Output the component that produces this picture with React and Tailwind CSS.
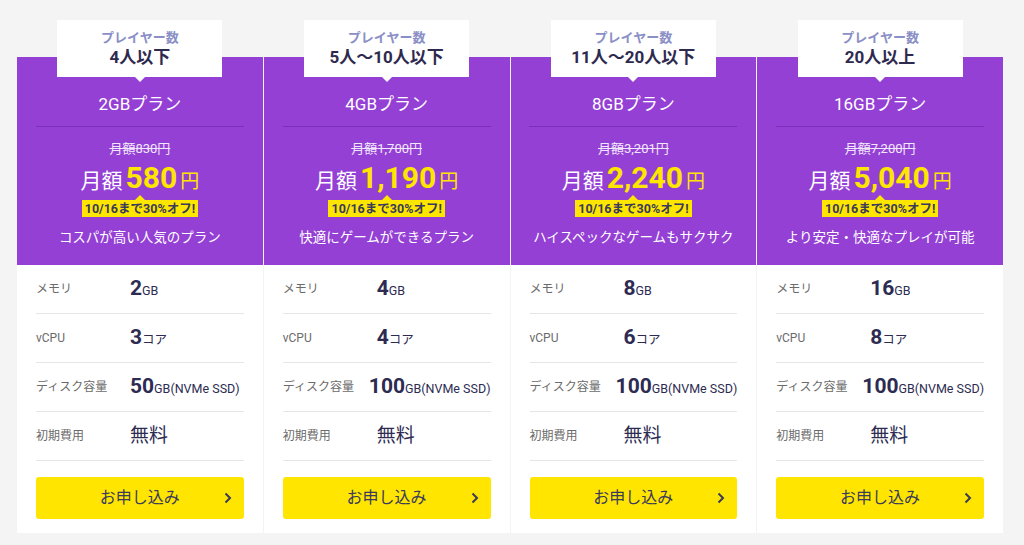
import React from "react";

const plans = [
  { players: "4人以下", plan: "2GB", old: "830", price: "580", desc: "コスパが高い人気のプラン", mem: "2", cpu: "3", disk: "50" },
  { players: "5人〜10人以下", plan: "4GB", old: "1,700", price: "1,190", desc: "快適にゲームができるプラン", mem: "4", cpu: "4", disk: "100" },
  { players: "11人〜20人以下", plan: "8GB", old: "3,201", price: "2,240", desc: "ハイスペックなゲームもサクサク", mem: "8", cpu: "6", disk: "100" },
  { players: "20人以上", plan: "16GB", old: "7,200", price: "5,040", desc: "より安定・快適なプレイが可能", mem: "16", cpu: "8", disk: "100" },
];

const SpecRow = ({ label, children }) => (
  <div className="flex items-center h-[49px] border-b border-[#e6e6e6]">
    <div className="w-[94px] shrink min-w-0 whitespace-nowrap text-[12px] text-[#6b6b6b]">{label}</div>
    <div className="shrink-0 whitespace-nowrap text-[#2d2b52] flex items-baseline">{children}</div>
  </div>
);

const PlanCard = ({ p }) => (
  <div className="flex flex-col bg-white">
    <div className="bg-[#9440d5] flex flex-col items-center h-[208px] text-white">
      <div className="relative -mt-[37px] w-[165px] h-[57px] bg-white flex flex-col items-center justify-center">
        <span className="text-[13px] font-bold text-[#8a8fc6] leading-[17px]">プレイヤー数</span>
        <span className="text-[17px] font-bold text-[#2e2a4f] leading-[22px]">{p.players}</span>
        <span className="absolute -bottom-[5px] left-1/2 -translate-x-1/2 w-0 h-0 border-l-[5px] border-r-[5px] border-t-[5px] border-l-transparent border-r-transparent border-t-white" />
      </div>
      <div className="mt-[15px] text-[17px] leading-[24px]">{p.plan}プラン</div>
      <div className="mt-[10px] w-[208px] h-px bg-[#7a2fb6]" />
      <div className="mt-[13px] text-[13px] leading-[18px] line-through text-[#f1e6fb]">月額{p.old}円</div>
      <div className="mt-[2px] flex items-baseline h-[36px] leading-[36px]">
        <span className="text-[21px] mr-[3px]">月額</span>
        <span className="text-[30px] font-bold text-[#ffe600] mr-[3px]">{p.price}</span>
        <span className="text-[19px] text-[#ffe600]">円</span>
      </div>
      <div className="relative mt-[4px] h-[17px] px-[3px] bg-[#ffe600] text-[12.5px] font-bold text-[#3a3a5a] leading-[17px] whitespace-nowrap">
        <span className="absolute -top-[5px] left-1/2 -translate-x-1/2 w-0 h-0 border-l-[5px] border-r-[5px] border-b-[5px] border-l-transparent border-r-transparent border-b-[#ffe600]" />
        10/16まで30%オフ!
      </div>
      <div className="mt-[10px] text-[13.5px] leading-[20px]">{p.desc}</div>
    </div>
    <div className="px-[19px] pb-[14px]">
      <SpecRow label="メモリ">
        <span className="text-[21px] font-bold">{p.mem}</span>
        <span className="text-[12.5px]">GB</span>
      </SpecRow>
      <SpecRow label="vCPU">
        <span className="text-[21px] font-bold">{p.cpu}</span>
        <span className="text-[12.5px]">コア</span>
      </SpecRow>
      <SpecRow label="ディスク容量">
        <span className="text-[21px] font-bold">{p.disk}</span>
        <span className="text-[12.5px]">GB(NVMe SSD)</span>
      </SpecRow>
      <SpecRow label="初期費用">
        <span className="text-[19px]">無料</span>
      </SpecRow>
      <button className="relative mt-[16px] w-full h-[42px] bg-[#ffe500] rounded-[3px] text-[16px] text-[#3a3a5a] flex items-center justify-center">
        お申し込み
        <svg className="absolute right-[12px] top-1/2 -translate-y-1/2" width="8" height="12" viewBox="0 0 8 12" fill="none">
          <path d="M1.5 1.5L6 6L1.5 10.5" stroke="#3a3a5a" strokeWidth="2" />
        </svg>
      </button>
    </div>
  </div>
);

export default function App() {
  return (
    <div
      className="w-[1024px] h-[545px] bg-[#f4f4f4] pt-[57px] pl-[17px] overflow-hidden"
      style={{ fontFamily: 'Roboto, "Noto Sans CJK JP", sans-serif' }}
    >
      <div className="grid grid-cols-4 gap-px w-[986px]">
        {plans.map((p) => (
          <PlanCard key={p.plan} p={p} />
        ))}
      </div>
    </div>
  );
}
